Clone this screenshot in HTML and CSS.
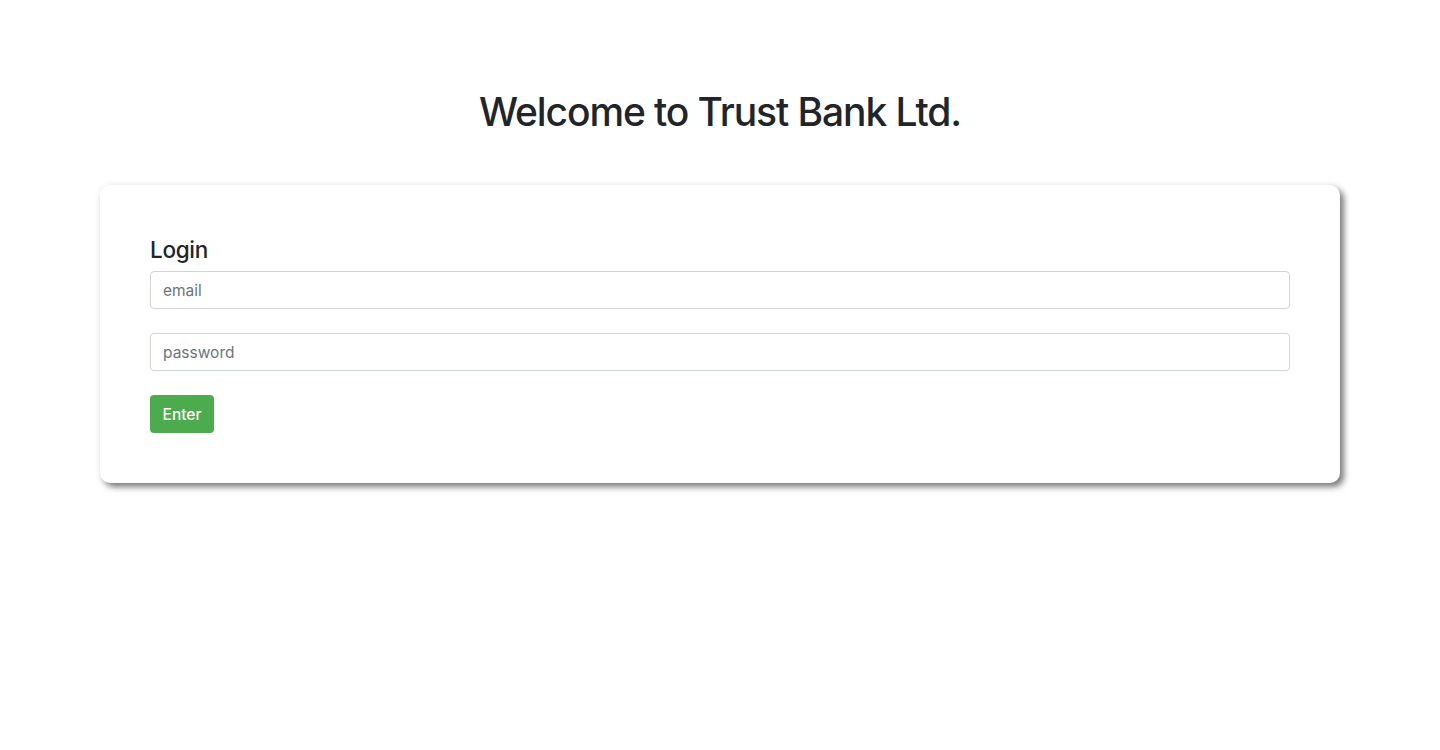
FILE: index.html
```html
<!DOCTYPE html>
<html lang="en">
<head>
<meta charset="utf-8">
<title>Trust Bank Ltd.</title>
<link rel="stylesheet" href="styles.css">
</head>
<body>
<main class="page">
  <h1 class="title">Welcome to Trust Bank Ltd.</h1>
  <section class="card">
    <h2 class="card-title">Login</h2>
    <form class="form">
      <div class="form-group"><input class="form-control" type="email" placeholder="email"></div>
      <div class="form-group"><input class="form-control" type="password" placeholder="password"></div>
      <button class="btn" type="button">Enter</button>
    </form>
  </section>
</main>
</body>
</html>
```

FILE: styles.css
```css
* { box-sizing: border-box; }
html, body { margin: 0; padding: 0; background: #fff; }
body {
  font-family: Inter, "Liberation Sans", Arial, sans-serif;
  color: #212529;
  font-size: 16px;
  line-height: 1.5;
  min-height: 100vh;
}
.page {
  padding: 88px 100px 100px;
}
.title {
  margin: 0 0 49px;
  text-align: center;
  font-size: 39px;
  font-weight: 500;
  line-height: 48px;
  letter-spacing: -1.1px;
}
.card {
  background: #fff;
  border-radius: 10px;
  padding: 50px;
  box-shadow: 4px 4px 6px rgba(0,0,0,0.5), 0 0 8px rgba(0,0,0,0.06);
}
.card-title {
  margin: 0 0 7px;
  font-size: 22.5px;
  font-weight: 500;
  line-height: 29px;
  letter-spacing: -0.3px;
}
.form { display: flex; flex-direction: column; align-items: flex-start; }
.form-group { width: 100%; margin-bottom: 24px; }
.form-control {
  display: block;
  width: 100%;
  height: 38px;
  padding: 6px 12px;
  font-family: inherit;
  font-size: 15.5px;
  color: #495057;
  background: #fff;
  border: 1px solid #ced4da;
  border-radius: 4px;
  outline: none;
}
.form-control::placeholder { color: #6c757d; opacity: 1; }
.btn {
  height: 38px;
  width: 64px;
  padding: 0;
  font-family: inherit;
  font-size: 15.5px;
  font-weight: 500;
  color: #fff;
  background: #4cab4c;
  border: none;
  border-radius: 4px;
  cursor: pointer;
}
```
